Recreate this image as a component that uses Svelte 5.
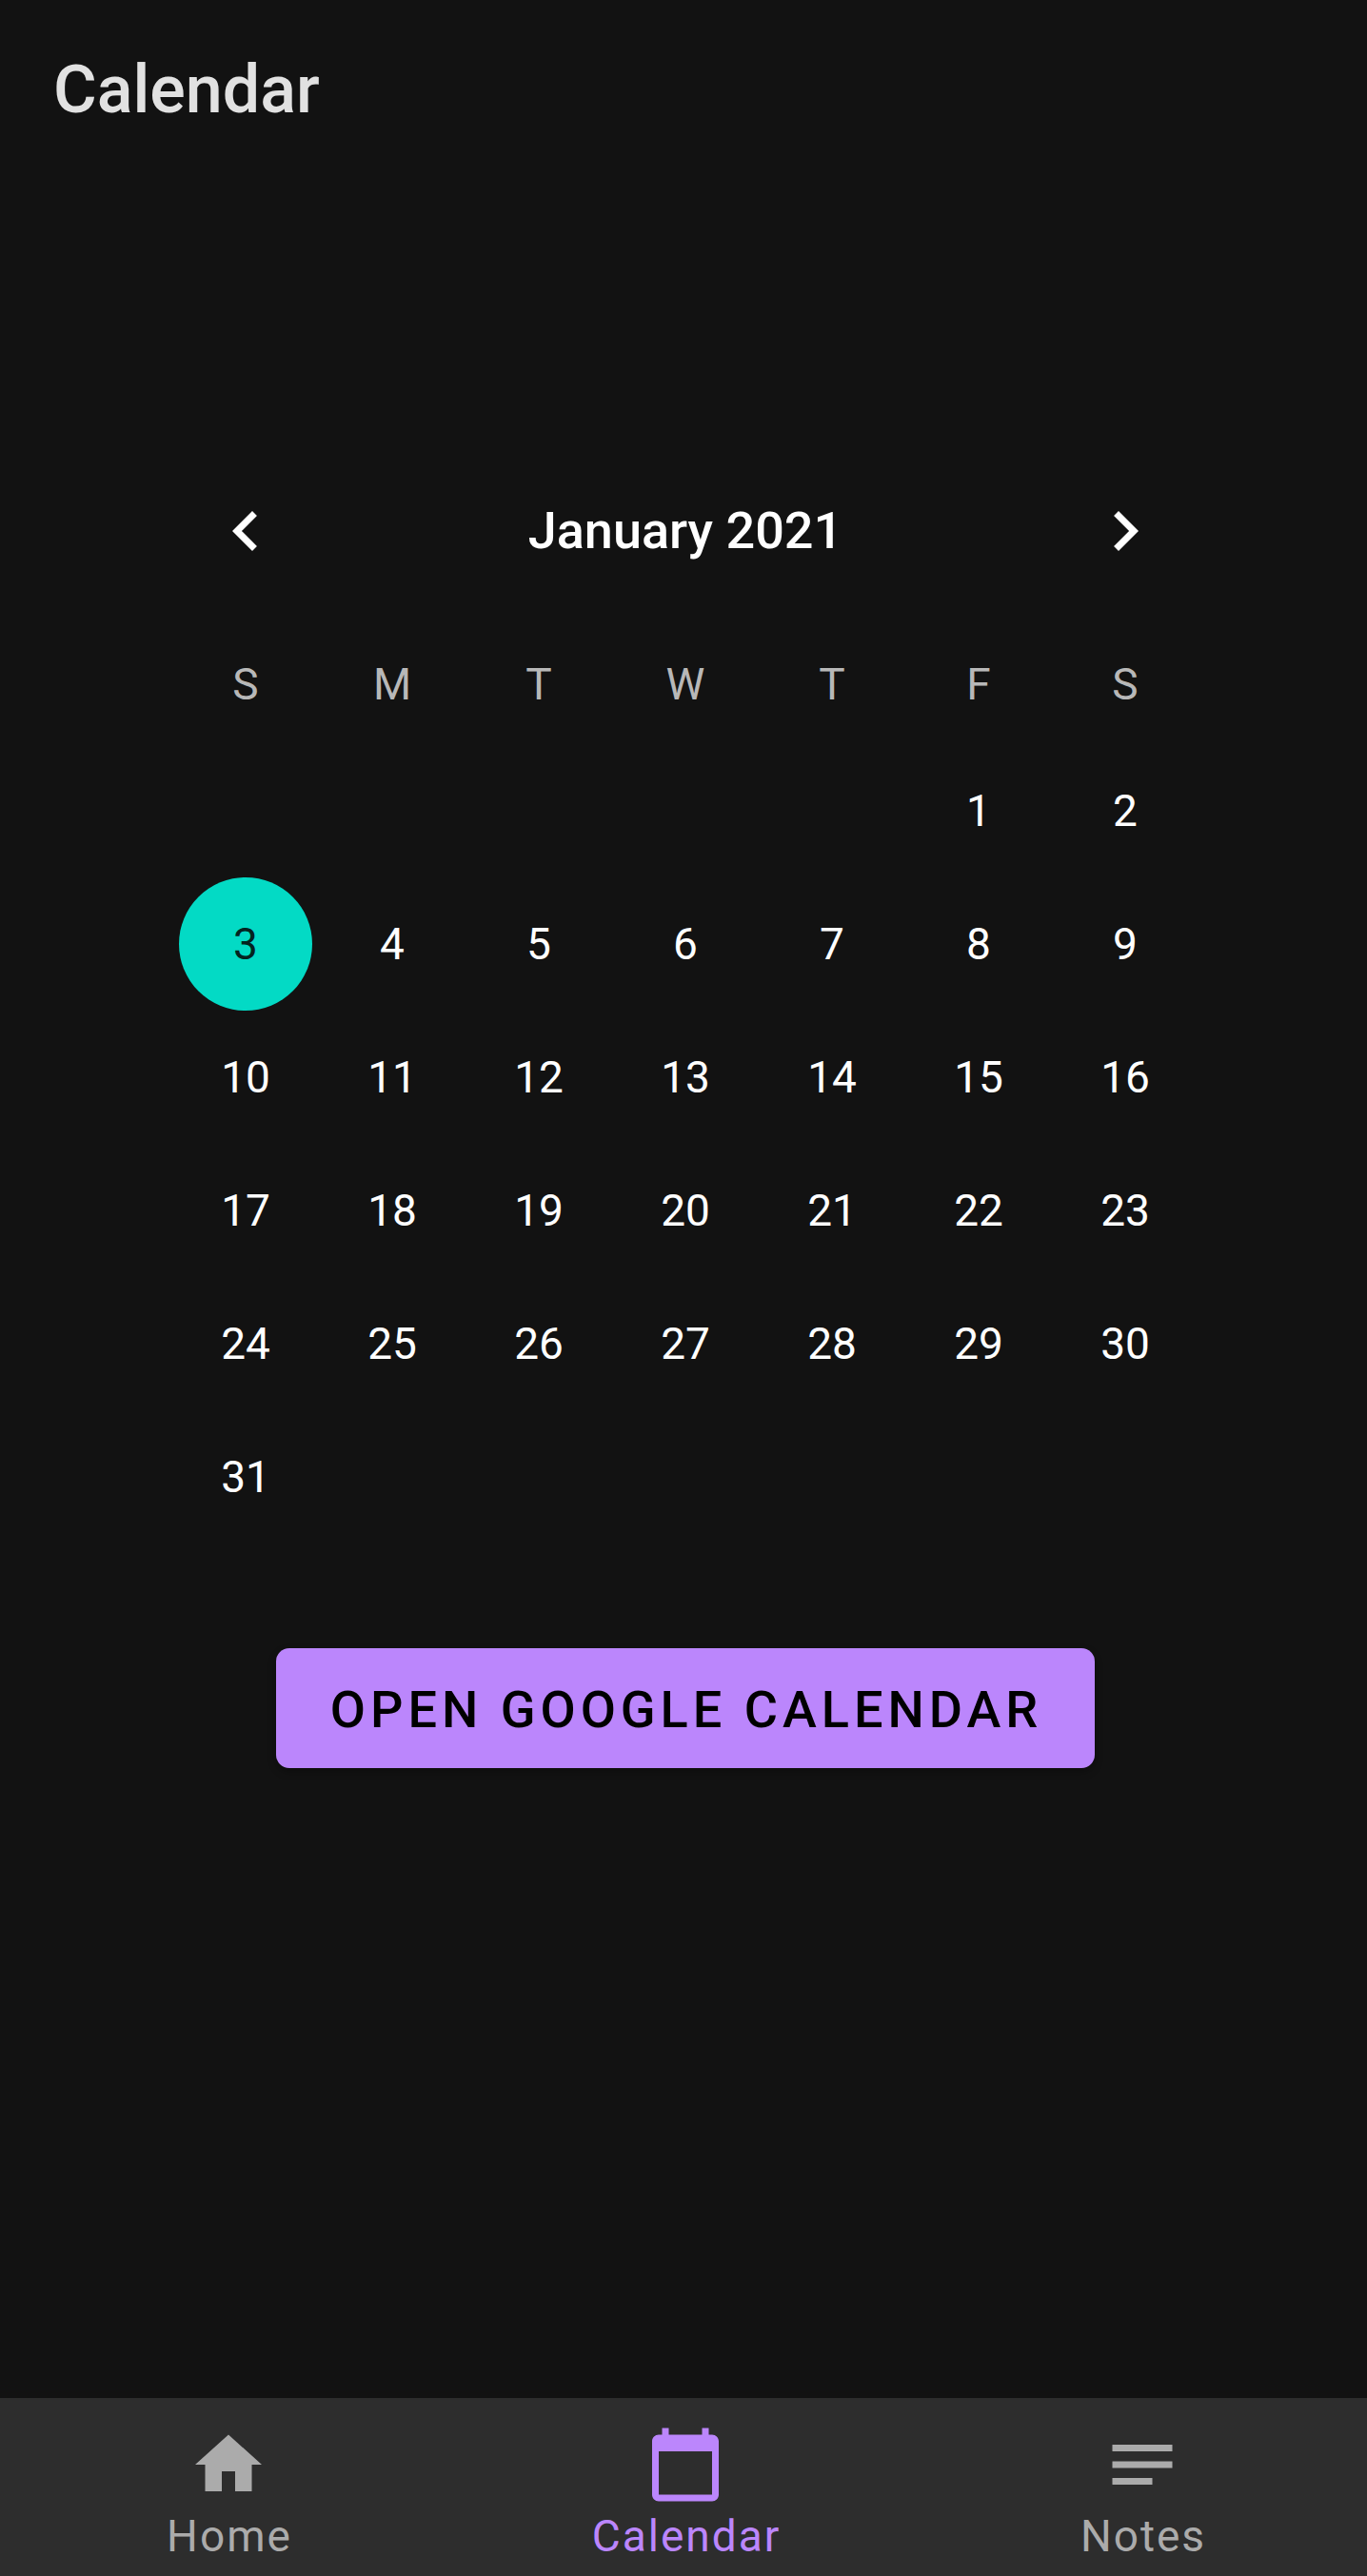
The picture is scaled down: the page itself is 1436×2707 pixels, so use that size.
<script>
  const weekdays = [
    ['Sunday', 'S'],
    ['Monday', 'M'],
    ['Tuesday', 'T'],
    ['Wednesday', 'W'],
    ['Thursday', 'T'],
    ['Friday', 'F'],
    ['Saturday', 'S'],
  ];

  let year = $state(2021);
  let month = $state(0);
  let selected = $state('2021-0-3');

  const title = $derived(
    new Date(year, month, 1).toLocaleDateString('en-US', { month: 'long', year: 'numeric' })
  );

  const weeks = $derived.by(() => {
    const lead = new Date(year, month, 1).getDay();
    const count = new Date(year, month + 1, 0).getDate();
    const rows = [];
    for (let start = 1 - lead; start <= count; start += 7) {
      rows.push(
        Array.from({ length: 7 }, (_, i) => {
          const day = start + i;
          return day >= 1 && day <= count ? day : null;
        })
      );
    }
    return rows;
  });

  function step(by) {
    const next = new Date(year, month + by, 1);
    year = next.getFullYear();
    month = next.getMonth();
  }

  const tabs = [
    { label: 'Home', path: 'M10 20v-6h4v6h5v-8h3L12 3 2 12h3v8z' },
    {
      label: 'Calendar',
      path: 'M20 3h-1V1h-2v2H7V1H5v2H4c-1.1 0-2 .9-2 2v16c0 1.1.9 2 2 2h16c1.1 0 2-.9 2-2V5c0-1.1-.9-2-2-2zm0 18H4V8h16v13z',
    },
    { label: 'Notes', path: 'M3 18h12v-2H3v2zM3 6v2h18V6H3zm0 7h18v-2H3v2z' },
  ];
</script>

<div class="screen">
  <div class="app">
    <header>
      <h1>Calendar</h1>
    </header>

    <main>
      <section class="calendar" aria-label="Calendar">
        <div class="month">
          <button class="arrow" aria-label="Previous month" onclick={() => step(-1)}>
            <svg viewBox="0 0 24 24" aria-hidden="true"><path d="M15.41 7.41L14 6l-6 6 6 6 1.41-1.41L10.83 12z" /></svg>
          </button>
          <h2>{title}</h2>
          <button class="arrow" aria-label="Next month" onclick={() => step(1)}>
            <svg viewBox="0 0 24 24" aria-hidden="true"><path d="M10 6L8.59 7.41 13.17 12l-4.58 4.59L10 18l6-6z" /></svg>
          </button>
        </div>

        <table>
          <thead>
            <tr>
              {#each weekdays as [name, letter]}
                <th scope="col" abbr={name}>{letter}</th>
              {/each}
            </tr>
          </thead>
          <tbody>
            {#each weeks as week}
              <tr>
                {#each week as day}
                  <td>
                    {#if day}
                      <button
                        class="day"
                        class:selected={selected === `${year}-${month}-${day}`}
                        aria-pressed={selected === `${year}-${month}-${day}`}
                        onclick={() => (selected = `${year}-${month}-${day}`)}>{day}</button>
                    {/if}
                  </td>
                {/each}
              </tr>
            {/each}
          </tbody>
        </table>
      </section>

      <button class="open">OPEN GOOGLE CALENDAR</button>
    </main>

    <nav aria-label="Main">
      {#each tabs as tab}
        <a href={'#' + tab.label.toLowerCase()} class:active={tab.label === 'Calendar'} aria-current={tab.label === 'Calendar' ? 'page' : undefined}>
          <svg viewBox="0 0 24 24" aria-hidden="true"><path d={tab.path} /></svg>
          <span>{tab.label}</span>
        </a>
      {/each}
    </nav>
  </div>
</div>

<style>
  :global(body) {
    background: #121212;
  }

  .screen {
    overflow: hidden;
    font-family: Roboto, 'Liberation Sans', sans-serif;
    color: #fff;
    background: #121212;
  }

  /* The layout runs slightly past the right edge of the window. */
  .app {
    display: flex;
    flex-direction: column;
    min-height: 100vh;
    margin-right: -4px;
  }

  header {
    padding: 54px 56px;
  }

  h1,
  h2 {
    margin: 0;
    font-weight: 500;
  }

  h1 {
    font-size: 70px;
    line-height: 80px;
    color: #e1e1e1;
  }

  main {
    flex: 1;
    display: flex;
    flex-direction: column;
    align-items: center;
    padding: 300px 56px 56px;
  }

  button {
    padding: 0;
    border: 0;
    background: none;
    color: inherit;
    font: inherit;
    cursor: pointer;
  }

  svg {
    display: block;
    width: 84px;
    height: 84px;
    fill: currentColor;
  }

  .calendar {
    width: 100%;
    max-width: 1078px;
  }

  .month {
    display: flex;
    align-items: center;
    justify-content: space-between;
    height: 140px;
  }

  .arrow {
    display: flex;
    justify-content: center;
    width: calc(100% / 7);
  }

  h2 {
    font-size: 54px;
    line-height: 64px;
  }

  table {
    width: 100%;
    table-layout: fixed;
    border-collapse: collapse;
    font-size: 46px;
    line-height: 56px;
  }

  th {
    box-sizing: border-box;
    height: 154px;
    padding: 28px 0 0;
    font-weight: 400;
    color: #b8b8b8;
  }

  td {
    height: 140px;
    padding: 0;
    text-align: center;
  }

  .day {
    width: 140px;
    height: 140px;
    border-radius: 50%;
    vertical-align: top;
  }

  .day.selected {
    background: #03dac5;
    color: #04231f;
  }

  .open {
    margin-top: 110px;
    padding: 33px 55px 29px 57px;
    border-radius: 14px;
    background: #bb86fc;
    box-shadow: 0 4px 8px rgb(0 0 0 / 0.3);
    color: #000;
    font-size: 54px;
    font-weight: 500;
    line-height: 64px;
    letter-spacing: 5px;
  }

  nav {
    display: flex;
    background: #2d2d2d;
  }

  nav a {
    flex: 1;
    display: flex;
    flex-direction: column;
    align-items: center;
    gap: 3px;
    padding: 28px 0 12px;
    color: #ababab;
    font-size: 46px;
    line-height: 60px;
    letter-spacing: 2px;
    text-decoration: none;
  }

  /* Balances the tracking after the last letter. */
  nav span {
    padding-left: 2px;
  }

  nav a.active {
    color: #bb86fc;
  }
</style>
